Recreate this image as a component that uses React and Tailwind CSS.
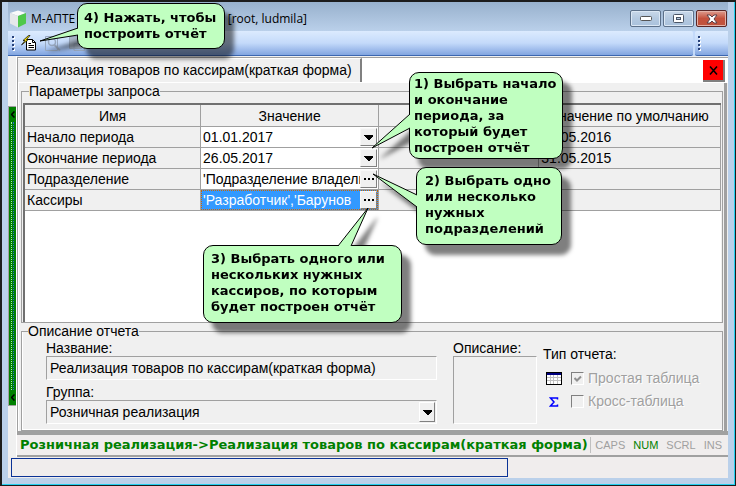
import { useState } from 'react';

const rows = [
  { name: 'Начало периода', value: '01.01.2017', kind: 'date', def: '31.05.2016' },
  { name: 'Окончание периода', value: '26.05.2017', kind: 'date', def: '31.05.2015' },
  { name: 'Подразделение', value: "'Подразделение владельца'", kind: 'pick', def: '' },
  { name: 'Кассиры', value: "'Разработчик','Барунов", kind: 'pick', def: '', selected: true },
];

// ── Small icons ───────────────────────────────────────────────────────────────
function CubeIcon() {
  return (
    <svg width="18" height="18" viewBox="0 0 18 18">
      <path d="M1 3 L9 0.5 L17 3 L9 6Z" fill="#fafafa" />
      <path d="M1 3 L9 6 V17.5 L1 13.5Z" fill="#e6e8ea" />
      <path d="M17 3 L9 6 V17.5 L17 13.5Z" fill="#4fc84a" />
    </svg>
  );
}

function RunIcon() {
  return (
    <svg width="16" height="16" viewBox="0 0 16 16">
      <path d="M5.5 4.5H11.5L14.5 7.5V15H5.5Z" fill="#fff" stroke="#000" />
      <path d="M11.5 4.5V7.5H14.5" fill="none" stroke="#000" />
      <path d="M7.5 8.5H10M7.5 10.5H13M7.5 12.5H13" stroke="#000" />
      <path d="M7.5 0.5L2 5.5H4L0.5 10L7.5 4.5H5.5L9 0.5Z" fill="#ffe600" stroke="#000" strokeWidth="0.7" />
    </svg>
  );
}

function PreviewIcon() {
  return (
    <svg width="17" height="17" viewBox="0 0 17 17" fill="none" stroke="#98a8bf">
      <path d="M1.5 1.5H13.5V15.5H1.5Z" />
      <circle cx="8" cy="7" r="3.5" strokeWidth="1.5" />
      <path d="M10.5 10L16 15.5" strokeWidth="2" />
    </svg>
  );
}

function PrintIcon() {
  return (
    <svg width="17" height="17" viewBox="0 0 17 17" fill="none" stroke="#98a8bf">
      <path d="M1.5 1.5H13.5V13.5H1.5Z" fill="#a9b6c8" />
      <path d="M6 8.5H16.5V15.5H6Z" />
    </svg>
  );
}

function TableIcon() {
  return (
    <svg width="16" height="13" viewBox="0 0 16 13" shapeRendering="crispEdges">
      <rect width="16" height="13" fill="#000" />
      <rect x="1" y="1" width="14" height="2" fill="#000080" />
      <rect x="1" y="3" width="14" height="9" fill="#fff" />
      <path d="M1 5.5H15M1 8.5H15M4.5 3V12M7.5 3V12M11.5 3V12" stroke="#c0c0c0" />
    </svg>
  );
}

function SumIcon() {
  return (
    <svg width="10" height="10" viewBox="0 0 10 10">
      <path d="M8.5 2.5V1H1.5L5 5L1.5 9H8.5V7.5" fill="none" stroke="#0000ff" strokeWidth="1.5" />
    </svg>
  );
}

function DownArrow() {
  return (
    <svg width="9" height="5" viewBox="0 0 9 5" shapeRendering="crispEdges">
      <path d="M0 0H9V1L5 5H4L0 1Z" fill="#000" />
    </svg>
  );
}

function Dots() {
  return (
    <svg width="10" height="2" viewBox="0 0 10 2" shapeRendering="crispEdges">
      <path d="M0 0H2V2H0ZM4 0H6V2H4ZM8 0H10V2H8Z" fill="#000" />
    </svg>
  );
}

function LeftChevron() {
  return (
    <svg width="4" height="7" viewBox="0 0 4 7">
      <path d="M3.5 0.5L0.5 3.5L3.5 6.5" fill="none" stroke="#000" strokeWidth="1.5" />
    </svg>
  );
}

function Grip() {
  return (
    <span className="flex flex-col gap-[2px]">
      {[0, 1, 2, 3].map(i => (
        <span key={i} className="h-[2px] w-[2px] bg-[#27417a] shadow-[1px_1px_0_#fff]" />
      ))}
    </span>
  );
}

// ── Callout bubble with a pointer ─────────────────────────────────────────────
function Callout({ className, tail, lines }) {
  return (
    <div className={`absolute drop-shadow-[9px_10px_2px_rgba(0,0,0,0.5)] ${className}`}>
      <div className="h-full rounded-[10px] border border-black bg-[#c0ffc0] font-['DejaVu_Sans'] text-[13px] leading-4 font-bold whitespace-nowrap text-black">
        {lines.map(l => <div key={l}>{l}</div>)}
      </div>
      <svg className="absolute top-0 left-0 overflow-visible" width="1" height="1">
        <path d={tail} fill="#c0ffc0" stroke="#000" />
      </svg>
    </div>
  );
}

// ── Window chrome ─────────────────────────────────────────────────────────────
function TitleBar() {
  const plain = 'flex h-[17px] w-[31px] items-center justify-center rounded-[2px] border border-[#5c7089] bg-linear-to-b from-[#c9d8e9] via-[#b4c9e0] to-[#a9c1dc] shadow-[inset_0_0_0_1px_#dbe7f4]';
  return (
    <header className="flex h-[29px] shrink-0 items-start justify-between bg-linear-to-b from-[#98b1cd] to-[#bad0ea] pr-[1px] pl-[1px]">
      <div className="flex items-center gap-1 pt-[7px]">
        <CubeIcon />
        <h1 className="flex w-[276px] justify-between font-['Open_Sans'] text-[12px] leading-5 whitespace-nowrap text-black">
          <span>М-АПТЕ</span>
          <span>в [root, ludmila]</span>
        </h1>
      </div>
      <div className="flex gap-[2px] pt-2">
        <button aria-label="Свернуть" className={plain}>
          <svg width="12" height="5" viewBox="0 0 12 5"><rect x="0.5" y="0.5" width="11" height="4" rx="1" fill="#fff" stroke="#555" /></svg>
        </button>
        <button aria-label="Развернуть" className={plain}>
          <svg width="11" height="9" viewBox="0 0 11 9">
            <rect x="0.5" y="0.5" width="10" height="8" rx="1" fill="#fff" stroke="#4a5566" />
            <rect x="3.5" y="3.5" width="4" height="2" fill="#b4c9e0" stroke="#4a5566" />
          </svg>
        </button>
        <button aria-label="Закрыть" className="flex h-[17px] w-[31px] items-center justify-center rounded-[2px] border border-[#5a2626] bg-linear-to-b from-[#dd9c8f] via-[#c4503c] to-[#c0553f] shadow-[inset_0_0_0_1px_#e3b2a8]">
          <svg width="12" height="10" viewBox="0 0 12 10">
            <path d="M1 1H4L6 3L8 1H11L8 5L11 9H8L6 7L4 9H1L4 5Z" fill="#fff" stroke="#5b4048" />
          </svg>
        </button>
      </div>
    </header>
  );
}

function Toolbar() {
  const band = 'flex items-center bg-linear-to-b from-[#dcebfe] via-[#c4dafa] to-[#82a5e0] border-b border-[#3b66b0]';
  return (
    <div className="flex h-[25px] shrink-0 gap-[2px] bg-[#c4dafa]">
      <div className={`${band} flex-1 gap-[7px] rounded-r-[2px] pl-1`}>
        <Grip />
        <button aria-label="Построить отчёт"><RunIcon /></button>
        <button aria-label="Просмотр" disabled><PreviewIcon /></button>
        <button aria-label="Печать" disabled><PrintIcon /></button>
      </div>
      <div className={`${band} w-[33px] rounded-l-[2px] pl-[3px]`}>
        <Grip />
      </div>
    </div>
  );
}

function Splitter() {
  return (
    <div className="flex w-2 shrink-0 flex-col pt-[50px] pb-[51px]">
      <button
        aria-label="Скрыть панель"
        className="flex flex-1 flex-col items-center justify-between border border-r-0 border-[#a0a0a0] bg-[#008000] py-1"
      >
        <LeftChevron />
        <span className="my-1 w-[3px] flex-1 border-x border-dotted border-l-[#a8f0a8] border-r-[#2060e0]" />
        <LeftChevron />
      </button>
    </div>
  );
}

// ── Parameter grid ────────────────────────────────────────────────────────────
function ParamTable() {
  const [values, setValues] = useState(rows.map(r => r.value));
  const th = 'h-[22px] border-r border-b border-[#a0a0a0] p-0 font-normal';
  const td = 'h-[21px] border-r border-b border-[#a0a0a0] p-0';
  return (
    <table className="w-full table-fixed border-separate border-spacing-0 bg-[#f0f0f0] leading-4">
      <colgroup>
        <col className="w-[25.3%]" />
        <col className="w-[25.6%]" />
        <col className="w-[23%]" />
        <col />
      </colgroup>
      <thead>
        <tr>
          <th className={th}>Имя</th>
          <th className={th}>Значение</th>
          <th className={th}></th>
          <th className={th}>Значение по умолчанию</th>
        </tr>
      </thead>
      <tbody>
        {rows.map((r, i) => (
          <tr key={r.name}>
            <td className={`${td} pl-[2px]`}><label htmlFor={`p${i}`}>{r.name}</label></td>
            <td className={td}>
              <div className={`flex h-5 border border-dotted ${r.selected ? 'border-[#cc6600] bg-[#3399ff] text-white' : 'border-white bg-white'}`}>
                <input
                  id={`p${i}`}
                  className="min-w-0 flex-1 pl-[1px] outline-none"
                  value={values[i]}
                  onChange={e => setValues(values.map((v, k) => (k === i ? e.target.value : v)))}
                />
                <button
                  aria-label={`Выбрать: ${r.name}`}
                  className="flex w-[17px] shrink-0 items-center justify-center border border-t-[#f8f8f8] border-r-[#808080] border-b-[#808080] border-l-[#f8f8f8] bg-[#f0f0f0]"
                >
                  {r.kind === 'date' ? <DownArrow /> : <Dots />}
                </button>
              </div>
            </td>
            <td className={td}></td>
            <td className={`${td} pl-[2px]`}>{r.def}</td>
          </tr>
        ))}
      </tbody>
    </table>
  );
}

// ── Report description ────────────────────────────────────────────────────────
function TypeOption({ icon, label, checked }) {
  return (
    <div className="flex h-[23px] items-center">
      <span className="flex w-[22px] justify-center">{icon}</span>
      <label className="flex items-center gap-1 pl-[6px] text-[#a0a0a0] [text-shadow:1px_1px_0_#fff]">
        <span className="relative flex">
          <input
            type="checkbox"
            disabled
            defaultChecked={checked}
            className="h-[13px] w-[13px] appearance-none border border-t-[#808080] border-r-white border-b-white border-l-[#808080] bg-[#f0f0f0]"
          />
          {checked && (
            <svg className="absolute top-[3px] left-[3px]" width="8" height="8" viewBox="0 0 8 8">
              <path d="M0.5 3L3 5.5L7 1.5" fill="none" stroke="#909090" strokeWidth="2" />
            </svg>
          )}
        </span>
        {label}
      </label>
    </div>
  );
}

function Description() {
  const sunken = 'border border-t-[#a0a0a0] border-l-[#a0a0a0] border-r-white border-b-white bg-[#f0f0f0]';
  return (
    <div className="flex gap-4 pt-[1px] pr-4 pb-[6px] pl-6 whitespace-nowrap">
      <div className="flex flex-1 flex-col">
        <label htmlFor="name" className="leading-4">Название:</label>
        <input id="name" readOnly value="Реализация товаров по кассирам(краткая форма)" className={`h-6 px-[3px] outline-none ${sunken}`} />
        <label htmlFor="group" className="pt-1 leading-4">Группа:</label>
        <div className="relative flex">
          <select id="group" className={`h-6 flex-1 appearance-none px-[3px] ${sunken}`}>
            <option>Розничная реализация</option>
          </select>
          <span className="pointer-events-none absolute inset-y-[2px] right-[2px] flex w-4 items-center justify-center border border-t-white border-r-[#808080] border-b-[#808080] border-l-white bg-[#f0f0f0]">
            <DownArrow />
          </span>
        </div>
      </div>
      <div className="flex w-[84px] flex-col">
        <label htmlFor="descr" className="leading-4">Описание:</label>
        <textarea id="descr" className={`flex-1 resize-none outline-none ${sunken}`} />
      </div>
      <fieldset className="-ml-[10px] w-[163px] pt-[6px]">
        <legend className="float-left mb-[5px] w-full leading-4">Тип отчета:</legend>
        <div className="clear-both">
          <TypeOption icon={<TableIcon />} label="Простая таблица" checked />
          <TypeOption icon={<SumIcon />} label="Кросс-таблица" />
        </div>
      </fieldset>
    </div>
  );
}

function StatusBar() {
  return (
    <div className="flex h-[23px] shrink-0 items-center justify-between border-t border-b-2 border-[#a0a0a0] bg-[#f0eded] pr-[6px] pl-[3px] whitespace-nowrap">
      <span className="font-['DejaVu_Sans'] text-[13px] font-bold text-[#008000]">
        Розничная реализация-&gt;Реализация товаров по кассирам(краткая форма)
      </span>
      <span className="flex gap-2 border-l border-[#c0c0c0] pl-1 font-['Liberation_Sans'] text-[11px] text-[#a0a0a0]">
        <span>CAPS</span>
        <span className="text-[#008000]">NUM</span>
        <span>SCRL</span>
        <span>INS</span>
      </span>
    </div>
  );
}

export default function App() {
  return (
    <div className="relative flex min-h-screen flex-col border-t-2 border-r border-b border-l-2 border-[#1c1c1c] bg-[#bad0ea] font-['Liberation_Sans'] text-[14px] text-black">
      <div className="flex flex-1 flex-col border-r border-b border-[#22d0f0] pr-[6px] pb-[6px] pl-[6px]">
        <TitleBar />
        <Toolbar />
        <div className="flex flex-1 flex-col bg-[#f0f0f0]">
          <div className="flex flex-1">
            <Splitter />
            <main className="flex min-w-0 flex-1 flex-col border-l border-white pt-[1px]">
              <section className="flex flex-1 flex-col border-t border-b-[3px] border-l border-[#a0a0a0]">
                {/* Tab strip */}
                <div className="flex h-[25px] shrink-0 justify-between border-b border-white bg-white">
                  <button className="border-t border-r-2 border-t-white border-r-[#808080] bg-[#f0f0f0] px-2 whitespace-nowrap">
                    Реализация товаров по кассирам(краткая форма)
                  </button>
                  <button
                    aria-label="Закрыть вкладку"
                    className="mt-[2px] mr-[3px] flex h-[22px] w-[22px] items-center justify-center border-r-2 border-b-2 border-[#808080] bg-[#ff0000]"
                  >
                    <svg width="9" height="9" viewBox="0 0 9 9"><path d="M1 0.5L8 8.5M8 0.5L1 8.5" stroke="#000" strokeWidth="1.5" /></svg>
                  </button>
                </div>
                <div className="mr-[1px] flex flex-1 flex-col border-r-[3px] border-l border-r-[#a0a0a0] border-l-white pr-[1px] pl-[2px]">
                  <fieldset className="flex flex-1 flex-col border border-[#a0a0a0] px-[1px]">
                    <legend className="ml-[6px] leading-4">Параметры запроса</legend>
                    <div className="mt-1 flex-1 border-t-2 border-l-2 border-[#707070] bg-white">
                      <ParamTable />
                    </div>
                  </fieldset>
                  <fieldset className="border border-[#a0a0a0] shadow-[inset_1px_-1px_0_#fff]">
                    <legend className="ml-[6px] leading-4">Описание отчета</legend>
                    <Description />
                  </fieldset>
                </div>
              </section>
              <StatusBar />
            </main>
          </div>
          {/* Progress */}
          <div className="flex h-[21px] shrink-0 bg-[#f0eded] pt-[1px] pb-[1px] pl-[3px]">
            <div role="progressbar" aria-label="Ход выполнения" className="w-[69.3%] border border-[#0a3296]" />
          </div>
        </div>
      </div>

      <Callout
        className="top-[1px] left-[75px] h-[46px] w-[148px] [&>div]:px-[6px] [&>div]:py-[6px]"
        tail="M1 25 L-37 38 L1 32"
        lines={['4) Нажать, чтобы', 'построить отчёт']}
      />
      <Callout
        className="top-[70px] left-[407px] h-[87px] w-[154px] [&>div]:px-1 [&>div]:py-[3px]"
        tail="M1 42 L-37 76 L1 56"
        lines={['1) Выбрать начало', 'и окончание', 'периода, за', 'который будет', 'построен отчёт']}
      />
      <Callout
        className="top-[165px] left-[414px] h-[78px] w-[146px] [&>div]:px-2 [&>div]:py-[5px]"
        tail="M1 28 L-43 7 L1 40"
        lines={['2) Выбрать одно', 'или несколько', 'нужных', 'подразделений']}
      />
      <Callout
        className="top-[243px] left-[201px] h-[78px] w-[199px] [&>div]:px-[7px] [&>div]:py-[5px]"
        tail="M135 1 L165 -37 L148 1"
        lines={['3) Выбрать одного или', 'нескольких нужных', 'кассиров, по которым', 'будет построен отчёт']}
      />
    </div>
  );
}
